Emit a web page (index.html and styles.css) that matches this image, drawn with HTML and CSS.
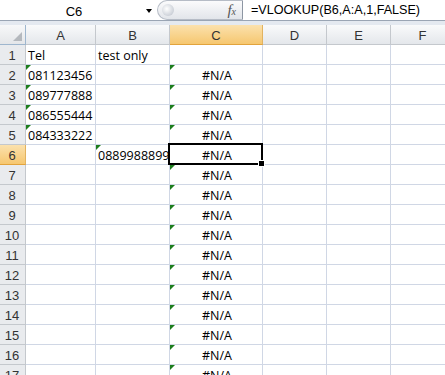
FILE: index.html
```html
<!DOCTYPE html>
<html lang="en">
<head>
    <meta charset="UTF-8">
    <title>Book1 - VLOOKUP</title>
    <link rel="stylesheet" href="styles.css">
</head>
<body>
    <div class="formula-bar">
        <div class="name-box">
            <span class="name">C6</span>
            <span class="arrow"></span>
        </div>
        <div class="fx-area">
            <span class="knob"></span>
            <span class="fx">f<small>x</small></span>
        </div>
        <div class="formula">=VLOOKUP(B6,A:A,1,FALSE)</div>
    </div>
    <div class="gap"></div>

    <div class="sheet">
        <div class="corner"><span class="corner-tri"></span></div>
        <div class="ch">A</div><div class="ch">B</div><div class="ch sel">C</div><div class="ch">D</div><div class="ch">E</div><div class="ch">F</div>

        <div class="rh">1</div><div class="c">Tel</div><div class="c">test only</div><div class="c"></div><div class="c"></div><div class="c"></div><div class="c"></div>
        <div class="rh">2</div><div class="c tag">081123456</div><div class="c"></div><div class="c tag mid">#N/A</div><div class="c"></div><div class="c"></div><div class="c"></div>
        <div class="rh">3</div><div class="c tag">089777888</div><div class="c"></div><div class="c tag mid">#N/A</div><div class="c"></div><div class="c"></div><div class="c"></div>
        <div class="rh">4</div><div class="c tag">086555444</div><div class="c"></div><div class="c tag mid">#N/A</div><div class="c"></div><div class="c"></div><div class="c"></div>
        <div class="rh">5</div><div class="c tag">084333222</div><div class="c"></div><div class="c tag mid">#N/A</div><div class="c"></div><div class="c"></div><div class="c"></div>
        <div class="rh sel">6</div><div class="c"></div><div class="c tag">0889988899</div><div class="c mid active">#N/A</div><div class="c"></div><div class="c"></div><div class="c"></div>
        <div class="rh">7</div><div class="c"></div><div class="c"></div><div class="c tag mid">#N/A</div><div class="c"></div><div class="c"></div><div class="c"></div>
        <div class="rh">8</div><div class="c"></div><div class="c"></div><div class="c tag mid">#N/A</div><div class="c"></div><div class="c"></div><div class="c"></div>
        <div class="rh">9</div><div class="c"></div><div class="c"></div><div class="c tag mid">#N/A</div><div class="c"></div><div class="c"></div><div class="c"></div>
        <div class="rh">10</div><div class="c"></div><div class="c"></div><div class="c tag mid">#N/A</div><div class="c"></div><div class="c"></div><div class="c"></div>
        <div class="rh">11</div><div class="c"></div><div class="c"></div><div class="c tag mid">#N/A</div><div class="c"></div><div class="c"></div><div class="c"></div>
        <div class="rh">12</div><div class="c"></div><div class="c"></div><div class="c tag mid">#N/A</div><div class="c"></div><div class="c"></div><div class="c"></div>
        <div class="rh">13</div><div class="c"></div><div class="c"></div><div class="c tag mid">#N/A</div><div class="c"></div><div class="c"></div><div class="c"></div>
        <div class="rh">14</div><div class="c"></div><div class="c"></div><div class="c tag mid">#N/A</div><div class="c"></div><div class="c"></div><div class="c"></div>
        <div class="rh">15</div><div class="c"></div><div class="c"></div><div class="c tag mid">#N/A</div><div class="c"></div><div class="c"></div><div class="c"></div>
        <div class="rh">16</div><div class="c"></div><div class="c"></div><div class="c tag mid">#N/A</div><div class="c"></div><div class="c"></div><div class="c"></div>
        <div class="rh">17</div><div class="c"></div><div class="c"></div><div class="c tag mid">#N/A</div><div class="c"></div><div class="c"></div><div class="c"></div>
    </div>
</body>
</html>
```

FILE: styles.css
```css
html, body {
    margin: 0;
    padding: 0;
    width: 445px;
    height: 375px;
    overflow: hidden;
    background: #fff;
    font-family: "Liberation Sans", Arial, sans-serif;
    font-size: 13px;
    color: #000;
}
.formula-bar {
    display: flex;
    height: 20px;
    background: #fff;
    border-bottom: 1px solid #9aa5b4;
}
.name-box {
    width: 157px;
    display: flex;
    align-items: center;
    box-sizing: border-box;
}
.name {
    flex: 1;
    text-align: center;
    line-height: 15px;
    padding-top: 3px;
    padding-left: 2px;
}
.arrow {
    width: 0;
    height: 0;
    border-left: 3px solid transparent;
    border-right: 3px solid transparent;
    border-top: 4px solid #000;
    margin: 2px 5px 0 0;
}
.fx-area {
    width: 86px;
    height: 20px;
    box-sizing: border-box;
    position: relative;
    border-radius: 10px 0 0 10px;
    border: 1px solid #b6bcc6;
    border-right: 1px solid #8d96a3;
    background: linear-gradient(#fbfbfc, #e2e5ea);
}
.knob {
    position: absolute;
    left: 4px;
    top: 3px;
    width: 12px;
    height: 12px;
    border-radius: 50%;
    background: radial-gradient(circle at 40% 40%, #fff, #c9ced6 75%, #aeb5bf);
}
.fx {
    position: absolute;
    right: 6px;
    top: 1px;
    font-family: "Liberation Serif", serif;
    font-style: italic;
    font-size: 15px;
    color: #555;
}
.fx small {
    font-size: 10px;
}
.formula {
    flex: 1;
    padding-left: 8px;
    line-height: 15px;
    padding-top: 3px;
    font-size: 12.6px;
    white-space: nowrap;
}
.gap {
    height: 4px;
    background: #e4e9f0;
}
.sheet {
    display: grid;
    grid-template-columns: 26px 70px 74px 93px 64px 64px 64px;
    grid-auto-rows: 20px;
    width: 455px;
}
.sheet > div {
    box-sizing: border-box;
    border-right: 1px solid #d0d7e5;
    border-bottom: 1px solid #d0d7e5;
    white-space: nowrap;
    overflow: hidden;
    line-height: 15px;
    padding-top: 3px;
}
.corner {
    background: linear-gradient(#f7f8f9, #e4e6e9);
    position: relative;
    border-right: 1px solid #9eb6ce !important;
    border-bottom: 1px solid #9eb6ce !important;
}
.corner-tri {
    position: absolute;
    right: 3px;
    bottom: 3px;
    width: 0;
    height: 0;
    border-left: 9px solid transparent;
    border-bottom: 9px solid #b4b8bd;
}
.sheet .ch, .sheet .rh {
    background: linear-gradient(#f9fafb, #e4e7eb);
    color: #333;
    text-align: center;
    border-right: 1px solid #c4c8cd;
    border-bottom: 1px solid #c4c8cd;
}
.sheet .rh {
    background: #e9ebee;
    padding-right: 1px;
}
.sheet .ch.sel, .sheet .rh.sel {
    background: linear-gradient(#fbe1ad, #f6c770);
    border-right-color: #e2b360;
    border-bottom-color: #e2a33c;
}
.sheet .c {
    padding-left: 2px;
    font-family: "Open Sans", "Liberation Sans", sans-serif;
    font-size: 12.5px;
    line-height: 15px;
    padding-top: 3px;
}
.mid {
    text-align: center;
}
.tag {
    position: relative;
}
.tag::before {
    content: "";
    position: absolute;
    left: 0;
    top: 0;
    width: 0;
    height: 0;
    border-top: 5px solid #1d7d1d;
    border-right: 5px solid transparent;
}
.sheet .active {
    position: relative;
    overflow: visible;
}
.active::after {
    content: "";
    position: absolute;
    left: -2px;
    top: -2px;
    right: -1px;
    bottom: -1px;
    border: 2px solid #000;
}
.active::before {
    content: "";
    position: absolute;
    right: -3px;
    bottom: -3px;
    width: 5px;
    height: 5px;
    background: #000;
    border: 1px solid #fff;
    z-index: 2;
}
```
